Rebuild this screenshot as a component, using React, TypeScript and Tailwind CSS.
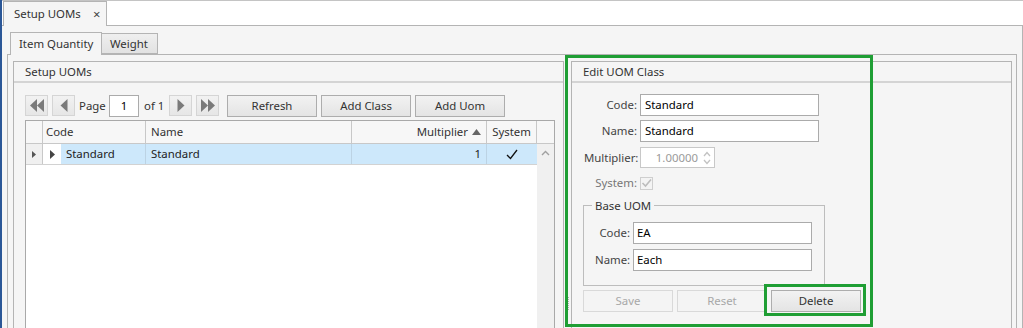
import React from 'react'

const font = { fontFamily: '"Segoe UI", "Noto Sans", "Open Sans", sans-serif' }

function Arrow({ dir, double }: { dir: 'left' | 'right'; double?: boolean }) {
  const tri = (x: number) =>
    dir === 'left' ? `${x + 7},2 ${x + 7},15 ${x},8.5` : `${x},2 ${x},15 ${x + 7},8.5`
  return (
    <svg width="16" height="17" viewBox="0 0 16 17">
      {double ? (
        <>
          <polygon points={tri(1)} fill="#7a7a7a" />
          <polygon points={tri(8)} fill="#7a7a7a" />
        </>
      ) : (
        <polygon points={tri(4.5)} fill="#7a7a7a" />
      )}
    </svg>
  )
}

function NavButton({ children }: { children: React.ReactNode }) {
  return (
    <div className="w-[23px] h-[21px] flex items-center justify-center border border-[#d5d5d5] bg-gradient-to-b from-[#f2f2f2] to-[#e6e6e6]">
      {children}
    </div>
  )
}

function Button({ label, w, disabled }: { label: string; w: string; disabled?: boolean }) {
  return (
    <div
      className={`${w} h-[22px] flex items-center justify-center border ${
        disabled
          ? 'border-[#d9d9d9] bg-[#f4f4f4] text-[#a8a8a8]'
          : 'border-[#adadad] bg-gradient-to-b from-[#f2f2f2] to-[#e4e4e4] text-[#333]'
      }`}
    >
      {label}
    </div>
  )
}

function Field({ label, value, lw }: { label: string; value: string; lw: string }) {
  return (
    <div className="flex items-center">
      <div className={`${lw} text-right text-[#444] whitespace-nowrap`}>{label}</div>
      <div className="ml-[3px] w-[179px] h-[22px] border border-[#ababab] bg-white flex items-center pl-[4px] text-black">
        {value}
      </div>
    </div>
  )
}

function GroupHeader({ title }: { title: string }) {
  return (
    <div className="h-[21px] flex items-center pl-[11px] text-[#333] border-b-2 border-[#d4d4d4]">{title}</div>
  )
}

export default function App() {
  return (
    <div
      className="relative w-[1023px] h-[328px] overflow-hidden bg-white border-l-2 border-[#2b5797] flex flex-col text-[11.4px] text-[#333]"
      style={font}
    >
      {/* document tab strip */}
      <div className="h-[25px] shrink-0 border-t border-[#c4c4c4] flex items-end">
        <div className="relative z-10 ml-[1px] -mb-px w-[104px] h-[25px] bg-[#f5f5f5] border border-b-0 border-[#b4b4b4] flex items-center pl-[10px]">
          <span className="w-[79px] whitespace-nowrap">Setup UOMs</span>
          <span className="text-[13px] leading-none text-[#444]">×</span>
        </div>
      </div>

      {/* document panel */}
      <div className="flex-1 min-h-0 border-t border-r border-[#b4b4b4] bg-[#f5f5f5] pt-[6px] px-[5px] flex flex-col">
        {/* inner tabs */}
        <div className="h-[22px] shrink-0 flex items-end pl-[3px]">
          <div className="relative z-10 -mb-px w-[92px] h-[23px] bg-[#f5f5f5] border border-b-0 border-[#b4b4b4] flex items-center pl-[8px] whitespace-nowrap">
            Item Quantity
          </div>
          <div className="w-[56px] h-[21px] bg-gradient-to-b from-[#efefef] to-[#e2e2e2] border border-l-0 border-[#b4b4b4] flex items-center pl-[8px]">
            Weight
          </div>
        </div>

        <div className="flex-1 min-h-0 border border-b-0 border-[#b4b4b4] bg-[#f5f5f5] pt-[6px] pl-[5px] pr-[4px] flex">
          {/* Setup UOMs group */}
          <div className="w-[551px] border border-b-0 border-[#b4b4b4] flex flex-col">
            <GroupHeader title="Setup UOMs" />
            <div className="flex-1 min-h-0 pt-[12px] pl-[11px] flex flex-col">
              <div className="flex items-center h-[21px] whitespace-nowrap">
                <NavButton>
                  <Arrow dir="left" double />
                </NavButton>
                <div className="ml-[4px]">
                  <NavButton>
                    <Arrow dir="left" />
                  </NavButton>
                </div>
                <span className="ml-[4px] w-[26px]">Page</span>
                <div className="ml-[4px] w-[30px] h-[22px] border border-[#ababab] bg-white flex items-center justify-center text-black">
                  1
                </div>
                <span className="ml-[5px] w-[20px]">of 1</span>
                <div className="ml-[5px]">
                  <NavButton>
                    <Arrow dir="right" />
                  </NavButton>
                </div>
                <div className="ml-[4px]">
                  <NavButton>
                    <Arrow dir="right" double />
                  </NavButton>
                </div>
                <div className="ml-[8px] flex gap-[4px]">
                  <Button label="Refresh" w="w-[90px]" />
                  <Button label="Add Class" w="w-[90px]" />
                  <Button label="Add Uom" w="w-[90px]" />
                </div>
              </div>

              {/* grid */}
              <div className="mt-[4px] w-[530px] flex-1 min-h-0 border border-b-0 border-[#a9a9a9] bg-white flex flex-col">
                <div className="h-[23px] flex border-b border-[#c8c8c8] bg-[#f7f7f7] shrink-0">
                  <div className="w-[17px] border-r border-[#c8c8c8]" />
                  <div className="w-[103px] border-r border-[#c8c8c8] flex items-center pl-[3px]">Code</div>
                  <div className="w-[206px] border-r border-[#c8c8c8] flex items-center pl-[5px]">Name</div>
                  <div className="w-[135px] border-r border-[#c8c8c8] flex items-center justify-end pr-[5px] gap-[4px]">
                    Multiplier
                    <svg width="9" height="6" viewBox="0 0 9 6">
                      <polygon points="0,6 9,6 4.5,0" fill="#666" />
                    </svg>
                  </div>
                  <div className="w-[50px] border-r border-[#c8c8c8] flex items-center justify-center">System</div>
                  <div className="w-[17px]" />
                </div>
                <div className="flex-1 min-h-0 flex">
                  <div className="w-[511px] flex flex-col">
                    <div className="h-[21px] flex border-b border-[#d2d2d2]">
                      <div className="w-[17px] bg-[#f0f0f0] border-r border-[#c8c8c8] flex items-center justify-center">
                        <svg width="4" height="7" viewBox="0 0 4 7">
                          <polygon points="0,0 4,3.5 0,7" fill="#555" />
                        </svg>
                      </div>
                      <div className="w-[18px] flex items-center justify-center">
                        <svg width="5" height="9" viewBox="0 0 5 9">
                          <polygon points="0,0 5,4.5 0,9" fill="#444" />
                        </svg>
                      </div>
                      <div className="w-[85px] bg-[#cde8fb] border-r border-[#bcd3e4] flex items-center pl-[5px] text-[#222]">
                        Standard
                      </div>
                      <div className="w-[206px] bg-[#cde8fb] border-r border-[#bcd3e4] flex items-center pl-[5px] text-[#222]">
                        Standard
                      </div>
                      <div className="w-[135px] bg-[#cde8fb] border-r border-[#bcd3e4] flex items-center justify-end pr-[5px] text-[#222]">
                        1
                      </div>
                      <div className="w-[50px] bg-[#cde8fb] flex items-center justify-center">
                        <svg width="12" height="11" viewBox="0 0 12 11">
                          <path d="M1 6 L4.5 9.5 L11 1" stroke="#111" strokeWidth="1.3" fill="none" />
                        </svg>
                      </div>
                    </div>
                  </div>
                  <div className="w-[17px] bg-[#f0f0f0] flex justify-center pt-[6px]">
                    <svg width="9" height="6" viewBox="0 0 9 6">
                      <path d="M1 5 L4.5 1.5 L8 5" stroke="#a0a0a0" strokeWidth="1.4" fill="none" />
                    </svg>
                  </div>
                </div>
              </div>
            </div>
          </div>

          {/* splitter */}
          <div className="w-[7px] flex flex-col justify-end pb-[17px] items-center">
            <div className="w-[2px] h-[14px] bg-[repeating-linear-gradient(to_bottom,#b0b0b0_0px,#b0b0b0_1px,transparent_1px,transparent_2px)]" />
          </div>

          {/* Edit UOM Class group */}
          <div className="w-[441px] border border-b-0 border-[#b4b4b4] flex flex-col">
            <GroupHeader title="Edit UOM Class" />
            <div className="pt-[11px] pl-[12px] flex flex-col">
              <Field label="Code:" value="Standard" lw="w-[53px]" />
              <div className="mt-[4px]">
                <Field label="Name:" value="Standard" lw="w-[53px]" />
              </div>
              <div className="mt-[5px] flex items-center">
                <div className="w-[53px] text-right text-[#444] whitespace-nowrap">Multiplier:</div>
                <div className="ml-[3px] w-[75px] h-[21px] border border-[#c8c8c8] bg-white flex items-center justify-end pr-[3px] text-[#9a9a9a]">
                  <span>1.00000</span>
                  <svg className="ml-[5px]" width="8" height="16" viewBox="0 0 8 16">
                    <path d="M1 6 L4 2.5 L7 6 M1 10 L4 13.5 L7 10" stroke="#c2c2c2" strokeWidth="1.3" fill="none" />
                  </svg>
                </div>
              </div>
              <div className="mt-[4px] h-[22px] flex items-center">
                <div className="w-[53px] text-right text-[#777]">System:</div>
                <div className="ml-[3px] w-[13px] h-[13px] border border-[#cfcfcf] bg-[#f4f4f4] flex items-center justify-center">
                  <svg width="11" height="10" viewBox="0 0 11 10">
                    <path d="M1.5 5 L4.5 8 L10 1.5" stroke="#bdbdbd" strokeWidth="1.6" fill="none" />
                  </svg>
                </div>
              </div>

              {/* Base UOM */}
              <div className="relative mt-[11px] -ml-[1px] w-[242px] h-[81px] border border-[#bdbdbd] pt-[16px] pl-[11px] flex flex-col">
                <div className="absolute -top-[9px] left-[8px] px-[3px] bg-[#f5f5f5] text-[#333]">Base UOM</div>
                <div className="flex items-center">
                  <div className="w-[35px] text-right text-[#444]">Code:</div>
                  <div className="ml-[3px] w-[179px] h-[22px] border border-[#ababab] bg-white flex items-center pl-[3px] text-black">
                    EA
                  </div>
                </div>
                <div className="mt-[5px] flex items-center">
                  <div className="w-[35px] text-right text-[#444]">Name:</div>
                  <div className="ml-[3px] w-[179px] h-[22px] border border-[#ababab] bg-white flex items-center pl-[3px] text-black">
                    Each
                  </div>
                </div>
              </div>

              <div className="mt-[4px] -ml-[1px] flex gap-[4px]">
                <Button label="Save" w="w-[90px]" disabled />
                <Button label="Reset" w="w-[90px]" disabled />
                <Button label="Delete" w="w-[90px]" />
              </div>
            </div>
          </div>
        </div>
      </div>

      {/* annotation highlights */}
      <div className="absolute left-[563px] top-[55px] w-[308px] h-[272px] border-[3px] border-[#1f9e34] pointer-events-none" />
      <div className="absolute left-[762px] top-[284px] w-[102px] h-[32px] border-[3px] border-[#1f9e34] pointer-events-none" />
    </div>
  )
}
